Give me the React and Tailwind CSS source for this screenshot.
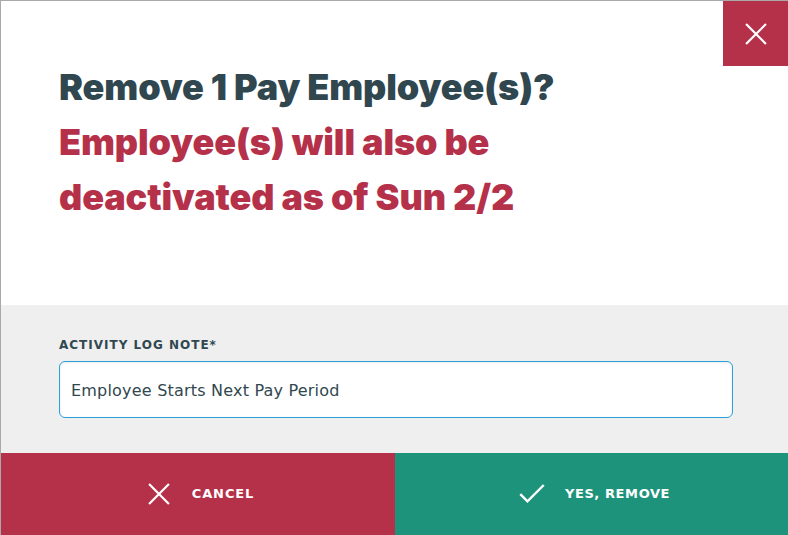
import React from 'react';

function XIcon({ className }) {
  return (
    <svg viewBox="0 0 24 24" className={className} fill="none" stroke="currentColor" strokeWidth="2.4" strokeLinecap="square">
      <path d="M2 2L22 22M22 2L2 22" />
    </svg>
  );
}

function CheckIcon({ className }) {
  return (
    <svg viewBox="0 0 28 22" className={className} fill="none" stroke="currentColor" strokeWidth="2.6" strokeLinecap="square">
      <path d="M2 12L9 19L26 2" />
    </svg>
  );
}

export default function App() {
  return (
    <div className="w-[788px] h-[535px] bg-white flex flex-col border-l border-t border-[#a9a9a9] overflow-hidden" style={{ fontFamily: '"Open Sans", sans-serif' }}>
      {/* Header */}
      <div className="relative h-[304px] px-[58px] pt-[59px]">
        <button className="absolute right-0 top-0 w-[65px] h-[65px] bg-[#b5314a] text-white flex items-center justify-center">
          <XIcon className="w-[22px] h-[22px]" />
        </button>
        <h1 className="text-[36px] leading-[55px] font-black tracking-[-0.1px]" style={{ fontFamily: 'Inter, sans-serif' }}>
          <span className="block text-[#30474f]">Remove 1 Pay Employee(s)?</span>
          <span className="block text-[#b5314a] w-[480px]">Employee(s) will also be deactivated as of Sun 2/2</span>
        </h1>
      </div>

      {/* Note section */}
      <div className="flex-1 bg-[#efefef] px-[58px] pt-[32px]">
        <label className="block text-[12px] font-bold tracking-[1px] text-[#30474f] uppercase leading-[16px]" style={{ fontFamily: '"DejaVu Sans", sans-serif' }}>
          Activity Log Note*
        </label>
        <div className="mt-[8px] w-[674px] h-[57px] bg-white border border-[#2a9fd8] rounded-[6px] flex items-center px-[11px] pt-[3px] shadow-[inset_0_1px_3px_rgba(0,0,0,0.08)]">
          <span className="text-[16px] tracking-[0.2px] text-[#30474f]" style={{ fontFamily: '"DejaVu Sans", sans-serif' }}>Employee Starts Next Pay Period</span>
        </div>
      </div>

      {/* Actions */}
      <div className="h-[82px] flex">
        <button className="w-[394px] bg-[#b5314a] text-white flex items-center justify-center gap-[22px] pl-[6px]">
          <XIcon className="w-[22px] h-[22px]" />
          <span className="text-[13px] font-bold tracking-[0.9px]" style={{ fontFamily: '"DejaVu Sans", sans-serif' }}>CANCEL</span>
        </button>
        <button className="flex-1 bg-[#1e937c] text-white flex items-center justify-center gap-[20px] pl-[6px]">
          <CheckIcon className="w-[26px] h-[20px]" />
          <span className="text-[13px] font-bold tracking-[0.6px]" style={{ fontFamily: '"DejaVu Sans", sans-serif' }}>YES, REMOVE</span>
        </button>
      </div>
    </div>
  );
}
